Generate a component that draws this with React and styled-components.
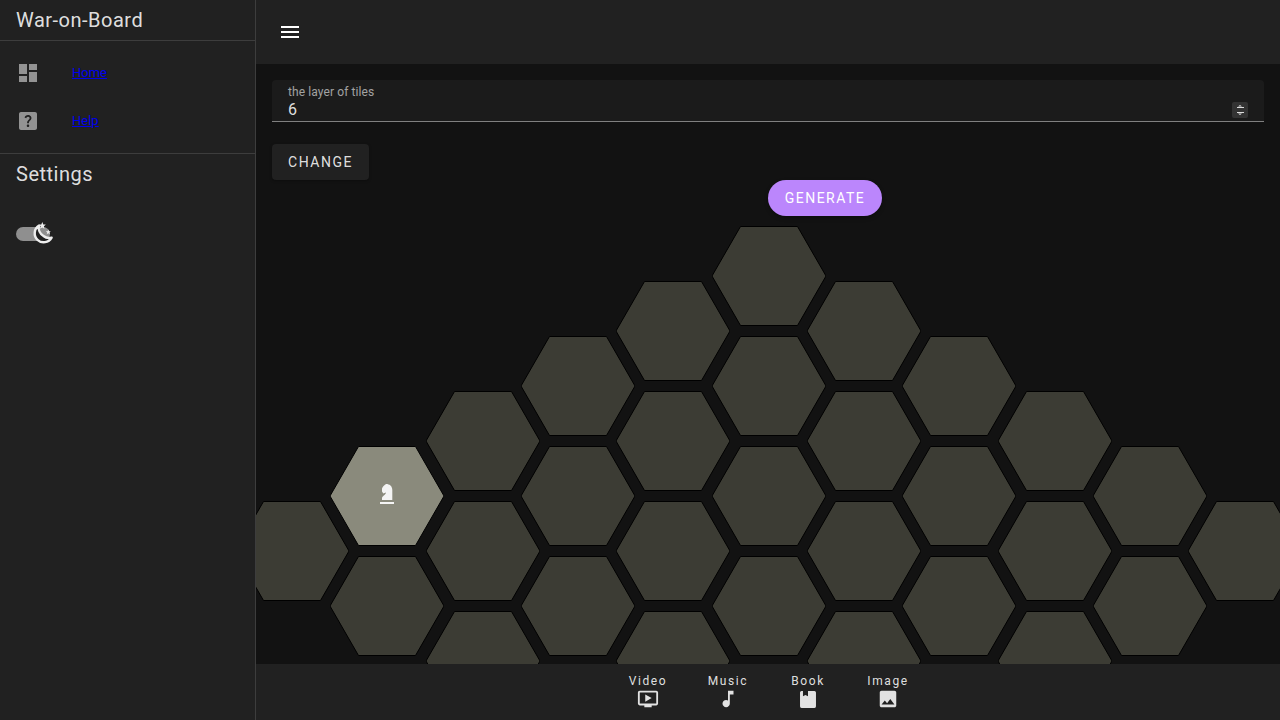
import React from 'react';
import styled, { createGlobalStyle } from 'styled-components';
import { MdDashboard, MdHelpCenter, MdMenu, MdOndemandVideo, MdMusicNote, MdImage } from 'react-icons/md';

const Global = createGlobalStyle`
  html, body { margin: 0; padding: 0; height: 100%; background: #121212; overflow: hidden; }
  * { box-sizing: border-box; }
  body { font-family: Roboto, "Noto Sans", sans-serif; color: rgba(255,255,255,.87); }
`;

const Shell = styled.div`
  display: flex;
  width: 1280px;
  height: 720px;
`;

const Sidebar = styled.aside`
  width: 256px;
  flex: none;
  background: #212121;
  border-right: 1px solid #3d3d3d;
`;

const Title = styled.h6`
  margin: 0;
  padding: 4px 16px;
  font-size: 20px;
  font-weight: 400;
  line-height: 32px;
  letter-spacing: .5px;
  color: rgba(255,255,255,.87);
`;

const Rule = styled.hr`
  margin: 0;
  border: 0;
  height: 1px;
  background: #3d3d3d;
`;

const NavList = styled.ul`
  list-style: none;
  margin: 0;
  padding: 8px 0;
`;

const NavItem = styled.li`
  display: flex;
  align-items: center;
  height: 48px;
  padding: 0 16px;
  svg { width: 24px; height: 24px; color: #939393; flex: none; }
`;

const NavLink = styled.a`
  margin-left: 32px;
  margin-top: -2px;
  font-size: 13px;
  color: #0000ee;
  text-decoration: underline;
`;

const SwitchRow = styled.div`
  padding: 33px 16px 0;
`;

const Track = styled.div`
  position: relative;
  width: 34px;
  height: 14px;
  border-radius: 7px;
  background: #8f8f8f;
  svg { position: absolute; left: 15px; top: -5px; width: 24px; height: 24px; }
`;

const Main = styled.main`
  flex: 1;
  min-width: 0;
  display: flex;
  flex-direction: column;
  overflow: hidden;
`;

const AppBar = styled.header`
  flex: none;
  height: 64px;
  padding: 0 22px;
  display: flex;
  align-items: center;
  background: #212121;
  svg { width: 24px; height: 24px; color: #fff; }
`;

const Content = styled.div`
  flex: 1;
  min-height: 0;
  position: relative;
  overflow: hidden;
`;

const Form = styled.div`
  position: relative;
  padding: 16px 16px 0;
`;

const Field = styled.div`
  position: relative;
  height: 42px;
  padding: 6px 16px 0;
  background: #1b1b1b;
  border-radius: 4px 4px 0 0;
  border-bottom: 1px solid #808080;
`;

const FieldLabel = styled.div`
  font-size: 12px;
  line-height: 13px;
  letter-spacing: .1px;
  color: rgba(255,255,255,.6);
`;

const FieldValue = styled.div`
  margin-top: 1px;
  font-size: 16px;
  line-height: 19px;
  letter-spacing: .15px;
`;

const Spinner = styled.div`
  position: absolute;
  right: 16px;
  top: 22px;
  width: 16px;
  height: 16px;
  border-radius: 2px;
  background: #333;
  svg { display: block; width: 16px; height: 16px; }
`;

const ChangeButton = styled.button`
  display: block;
  margin-top: 22px;
  width: 97px;
  height: 36px;
  border: 0;
  border-radius: 4px;
  background: #212121;
  color: rgba(255,255,255,.87);
  font: 400 14px Roboto, sans-serif;
  letter-spacing: 1.5px;
  box-shadow: 0 1px 3px rgba(0,0,0,.3);
`;

const GenerateRow = styled.div`
  position: relative;
  padding-left: 512px;
`;

const GenerateButton = styled.button`
  display: block;
  width: 114px;
  height: 36px;
  border: 0;
  border-radius: 18px;
  background: #bb86fc;
  color: #fff;
  font: 400 14px Roboto, sans-serif;
  letter-spacing: 1.5px;
  box-shadow: 0 2px 4px rgba(0,0,0,.3);
`;

const Board = styled.div`
  position: absolute;
  top: 162px;
  left: -21px;
  display: flex;
`;

const Column = styled.div`
  flex: none;
  width: 114px;
  margin-right: -18.67px;
  padding-top: ${p => p.$top}px;
  display: flex;
  flex-direction: column;
  gap: 10px;
`;

const Hex = styled.div`
  position: relative;
  flex: none;
  width: 114px;
  height: 100px;
  display: flex;
  align-items: center;
  justify-content: center;
`;

const HexShape = styled.svg`
  position: absolute;
  inset: 0;
  width: 100%;
  height: 100%;
`;

const Piece = styled.svg`
  position: relative;
  width: 16px;
  height: 22px;
  margin-bottom: 4px;
`;

const BottomNav = styled.nav`
  flex: none;
  height: 56px;
  background: #212121;
  display: flex;
  justify-content: center;
  position: relative;
`;

const Action = styled.div`
  width: 80px;
  display: flex;
  flex-direction: column;
  align-items: center;
  padding-top: 9px;
  font-size: 12px;
  line-height: 16px;
  letter-spacing: 1.6px;
  color: rgba(255,255,255,.87);
  svg { width: 22px; height: 22px; color: #e2e2e2; margin-top: -1px; }
`;

const columns = [
  { top: 275, n: 1 },
  { top: 220, n: 2, active: 0 },
  { top: 165, n: 3 },
  { top: 110, n: 4 },
  { top: 55, n: 5 },
  { top: 0, n: 5 },
  { top: 55, n: 5 },
  { top: 110, n: 4 },
  { top: 165, n: 3 },
  { top: 220, n: 2 },
  { top: 275, n: 1 },
];

const Knight = () => (
  <Piece viewBox="0 0 16 22" fill="#f4f4f4">
    <path d="M7 1 C10.5 1 13.3 3 13.3 7 V17 H3 V15.2 C3 13 6.5 12 7 9.4 L4.3 10.6 L3 8.6 V5.6 C3.6 3.6 5.2 2.2 7 1 Z" />
    <rect x="1" y="19" width="14" height="2" />
  </Piece>
);

const Tile = ({ active }) => (
  <Hex>
    <HexShape viewBox="0 0 114 100">
      <polygon points="0,50 28.5,0.5 85.5,0.5 114,50 85.5,99.5 28.5,99.5" fill={active ? '#8a8a7c' : '#3c3c34'} stroke="#000" strokeWidth="1" />
    </HexShape>
    {active && <Knight />}
  </Hex>
);

const MoonIcon = () => (
  <svg viewBox="0 0 24 24">
    <path d="M8 3.6 A9 9 0 1 0 20.6 15.6 A8.5 8.5 0 0 1 12.5 14 A9.5 9.5 0 0 1 8 3.6 Z" fill="#212121" stroke="#eee" strokeWidth="2.4" strokeLinejoin="round" />
    <path d="M11.3 0 l1 2.4 2.5.2-1.9 1.7.6 2.5-2.2-1.3-2.2 1.3.6-2.5-1.9-1.7 2.5-.2z" fill="#eee" />
    <path d="M17.3 7.5 l.7 1.7 1.8.1-1.4 1.2.5 1.8-1.6-1-1.6 1 .5-1.8-1.4-1.2 1.8-.1z" fill="#eee" />
  </svg>
);

const BookIcon = () => (
  <svg viewBox="0 0 24 24" fill="currentColor">
    <path d="M5 3.3 H6.5 V9 L9.2 7.5 L12 9 V3.3 H19 A1.7 1.7 0 0 1 20.7 5 V20 A1.7 1.7 0 0 1 19 21.8 H5 A1.7 1.7 0 0 1 3.3 20 V5 A1.7 1.7 0 0 1 5 3.3 Z" />
  </svg>
);

const SpinIcon = () => (
  <svg viewBox="0 0 16 16" fill="#ddd">
    <path d="M8 3 L10 4.6 H6 Z" />
    <rect x="5" y="5" width="7" height="1" />
    <rect x="5" y="10" width="7" height="1" />
    <path d="M6 11.4 H10 L8 13 Z" />
  </svg>
);

export default function App() {
  return (
    <>
      <Global />
      <Shell>
        <Sidebar>
          <Title>War-on-Board</Title>
          <Rule />
          <NavList>
            <NavItem><MdDashboard /><NavLink href="#">Home</NavLink></NavItem>
            <NavItem><MdHelpCenter /><NavLink href="#">Help</NavLink></NavItem>
          </NavList>
          <Rule />
          <Title>Settings</Title>
          <SwitchRow>
            <Track><MoonIcon /></Track>
          </SwitchRow>
        </Sidebar>
        <Main>
          <AppBar><MdMenu /></AppBar>
          <Content>
            <Board>
              {columns.map((c, i) => (
                <Column key={i} $top={c.top}>
                  {Array.from({ length: c.n }, (_, j) => <Tile key={j} active={c.active === j} />)}
                </Column>
              ))}
            </Board>
            <Form>
              <Field>
                <FieldLabel>the layer of tiles</FieldLabel>
                <FieldValue>6</FieldValue>
                <Spinner><SpinIcon /></Spinner>
              </Field>
              <ChangeButton>CHANGE</ChangeButton>
            </Form>
            <GenerateRow>
              <GenerateButton>GENERATE</GenerateButton>
            </GenerateRow>
          </Content>
          <BottomNav>
            <Action>Video<MdOndemandVideo /></Action>
            <Action>Music<MdMusicNote /></Action>
            <Action>Book<BookIcon /></Action>
            <Action>Image<MdImage /></Action>
          </BottomNav>
        </Main>
      </Shell>
    </>
  );
}
